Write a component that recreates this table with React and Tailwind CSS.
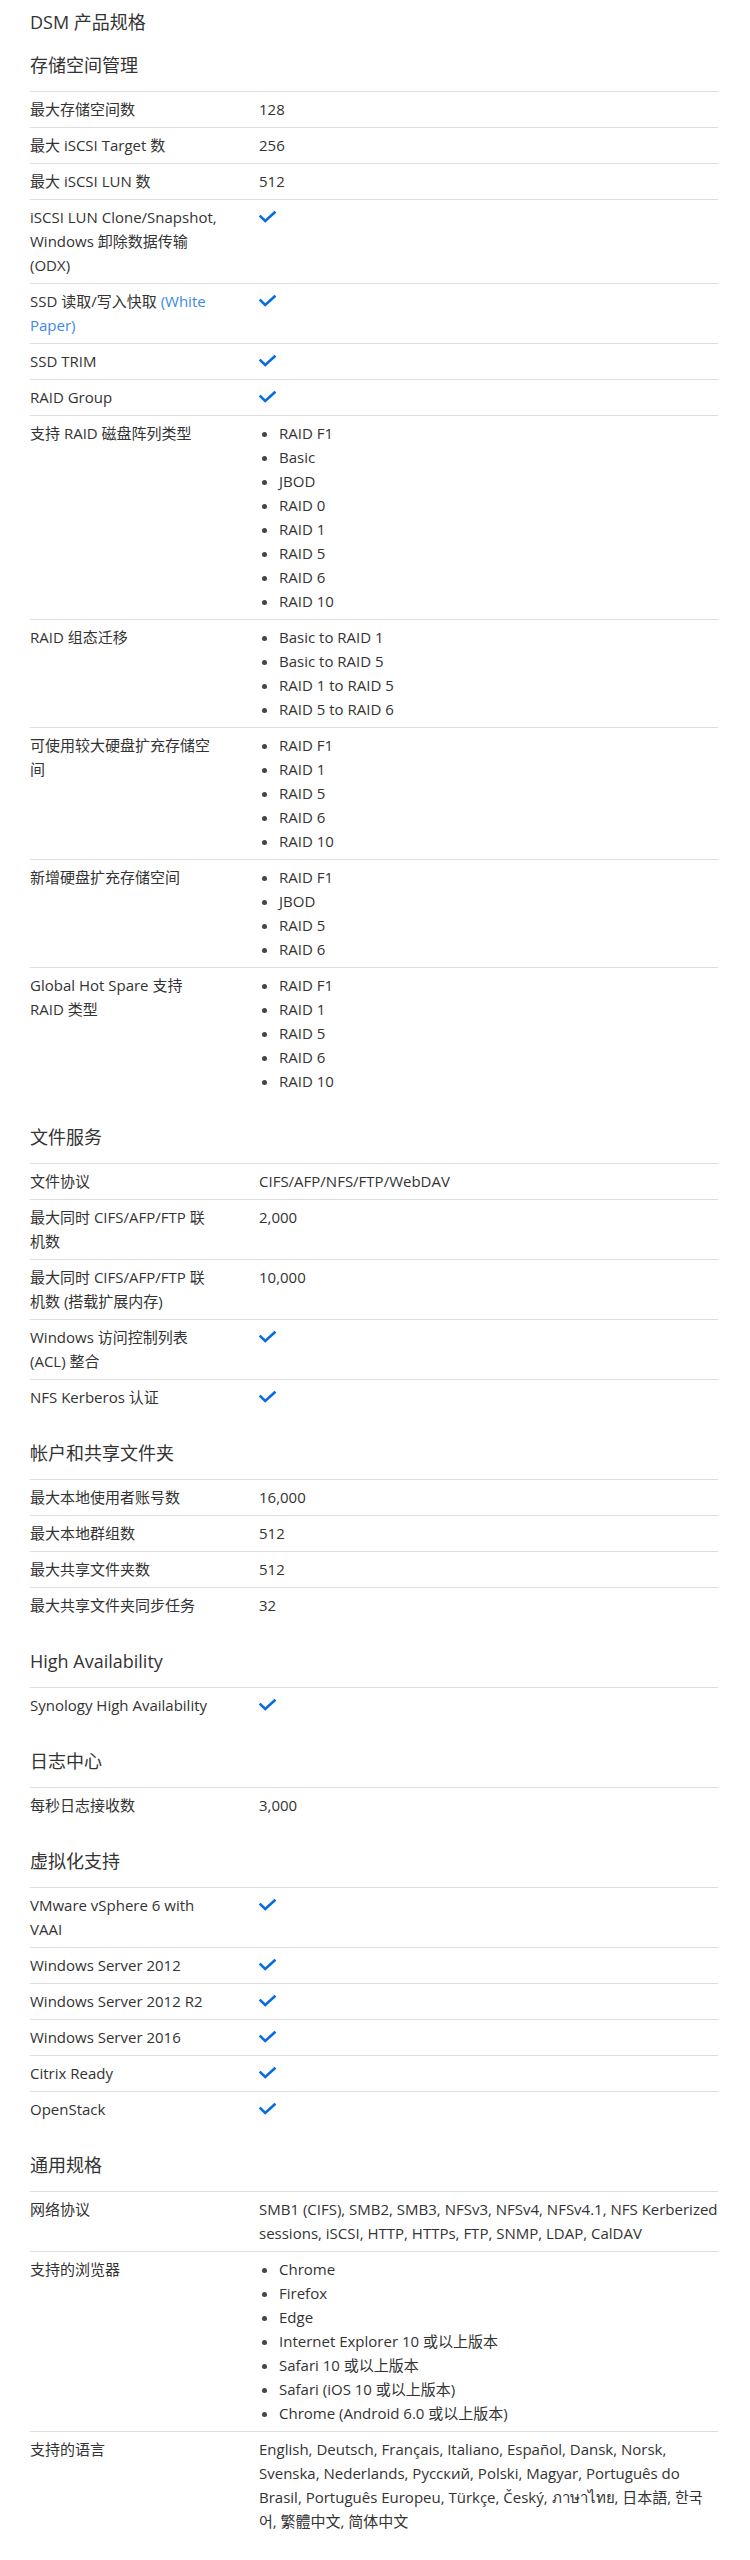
import React from 'react';

const CHECK = { check: true };

const sections = [
  {
    title: '存储空间管理',
    rows: [
      ['最大存储空间数', '128'],
      ['最大 iSCSI Target 数', '256'],
      ['最大 iSCSI LUN 数', '512'],
      ['iSCSI LUN Clone/Snapshot, Windows 卸除数据传输 (ODX)', CHECK],
      ['ssd', CHECK],
      ['SSD TRIM', CHECK],
      ['RAID Group', CHECK],
      ['支持 RAID 磁盘阵列类型', ['RAID F1', 'Basic', 'JBOD', 'RAID 0', 'RAID 1', 'RAID 5', 'RAID 6', 'RAID 10']],
      ['RAID 组态迁移', ['Basic to RAID 1', 'Basic to RAID 5', 'RAID 1 to RAID 5', 'RAID 5 to RAID 6']],
      ['可使用较大硬盘扩充存储空间', ['RAID F1', 'RAID 1', 'RAID 5', 'RAID 6', 'RAID 10']],
      ['新增硬盘扩充存储空间', ['RAID F1', 'JBOD', 'RAID 5', 'RAID 6']],
      ['Global Hot Spare 支持 RAID 类型', ['RAID F1', 'RAID 1', 'RAID 5', 'RAID 6', 'RAID 10']],
    ],
  },
  {
    title: '文件服务',
    rows: [
      ['文件协议', 'CIFS/AFP/NFS/FTP/WebDAV'],
      ['最大同时 CIFS/AFP/FTP 联机数', '2,000'],
      ['最大同时 CIFS/AFP/FTP 联机数 (搭载扩展内存)', '10,000'],
      ['Windows 访问控制列表 (ACL) 整合', CHECK],
      ['NFS Kerberos 认证', CHECK],
    ],
  },
  {
    title: '帐户和共享文件夹',
    rows: [
      ['最大本地使用者账号数', '16,000'],
      ['最大本地群组数', '512'],
      ['最大共享文件夹数', '512'],
      ['最大共享文件夹同步任务', '32'],
    ],
  },
  {
    title: 'High Availability',
    rows: [['Synology High Availability', CHECK]],
  },
  {
    title: '日志中心',
    rows: [['每秒日志接收数', '3,000']],
  },
  {
    title: '虚拟化支持',
    rows: [
      ['VMware vSphere 6 with VAAI', CHECK],
      ['Windows Server 2012', CHECK],
      ['Windows Server 2012 R2', CHECK],
      ['Windows Server 2016', CHECK],
      ['Citrix Ready', CHECK],
      ['OpenStack', CHECK],
    ],
  },
  {
    title: '通用规格',
    rows: [
      ['网络协议', 'SMB1 (CIFS), SMB2, SMB3, NFSv3, NFSv4, NFSv4.1, NFS Kerberized sessions, iSCSI, HTTP, HTTPs, FTP, SNMP, LDAP, CalDAV'],
      ['支持的浏览器', ['Chrome', 'Firefox', 'Edge', 'Internet Explorer 10 或以上版本', 'Safari 10 或以上版本', 'Safari (iOS 10 或以上版本)', 'Chrome (Android 6.0 或以上版本)']],
      ['支持的语言', 'English, Deutsch, Français, Italiano, Español, Dansk, Norsk, Svenska, Nederlands, Русский, Polski, Magyar, Português do Brasil, Português Europeu, Türkçe, Český, ภาษาไทย, 日本語, 한국어, 繁體中文, 简体中文'],
    ],
  },
];

const Check = () => (
  <div className="h-6 flex items-center">
    <svg width="17" height="12" viewBox="0 0 17 12" fill="none">
      <path d="M1.5 5.5 L6.2 10 L15.5 1.5" stroke="#0b6be0" strokeWidth="2.6" strokeLinecap="square" />
    </svg>
  </div>
);

const Label = ({ text }) => {
  if (text === 'ssd') {
    return (
      <>
        SSD 读取/写入快取 <a className="text-[#3d87ee]">(White Paper)</a>
      </>
    );
  }
  return text;
};

const Value = ({ value }) => {
  if (value && value.check) return <Check />;
  if (Array.isArray(value)) {
    return (
      <ul className="list-disc pl-5 marker:text-[#444]">
        {value.map((item) => (
          <li key={item}>{item}</li>
        ))}
      </ul>
    );
  }
  return <span>{value}</span>;
};

export default function App() {
  return (
    <div
      className="bg-white text-[#333] text-[15px] leading-6 pb-5"
      style={{ fontFamily: '"Open Sans", "Noto Sans CJK SC", sans-serif' }}
    >
      <div className="ml-[30px] w-[688px]">
        <h1 className="pt-[8px] text-[18px] leading-[28px] font-normal">DSM 产品规格</h1>
        {sections.map((section, i) => (
          <section key={section.title}>
            <h2 className={(i === 0 ? 'pt-[15px]' : 'pt-6') + ' pb-3 text-[18px] leading-7 font-normal'}>
              {section.title}
            </h2>
            <div>
              {section.rows.map(([label, value], idx) => (
                <div key={idx} className="flex border-t border-[#dddddd] pt-[5px] pb-[6px]">
                  <div className="w-[229px] shrink-0 pr-[40px]">
                    <Label text={label} />
                  </div>
                  <div className="flex-1 min-w-0">
                    <Value value={value} />
                  </div>
                </div>
              ))}
            </div>
          </section>
        ))}
      </div>
    </div>
  );
}
